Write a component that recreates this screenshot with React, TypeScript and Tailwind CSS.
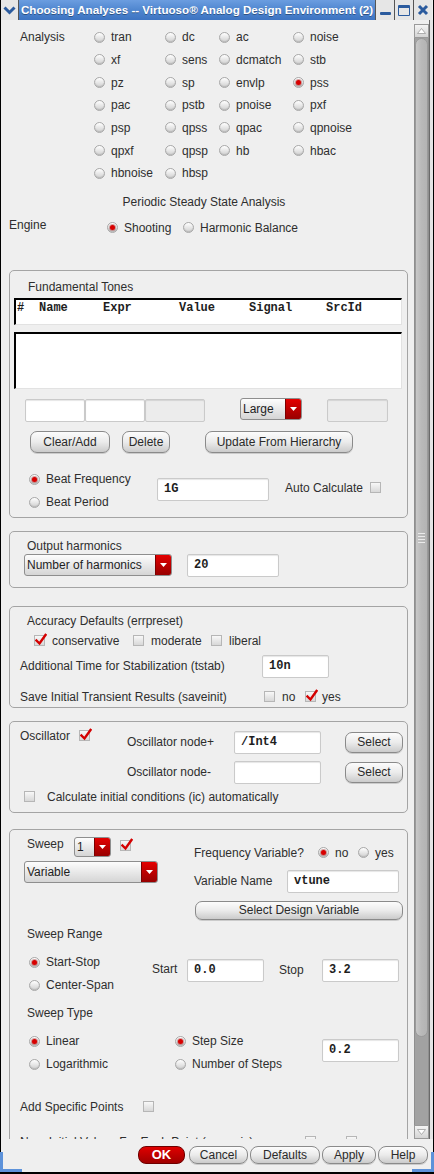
import type { ReactNode } from 'react';

type Opt = { label: string; on?: boolean };

const analyses: Opt[] = [
  { label: 'tran' }, { label: 'dc' }, { label: 'ac' }, { label: 'noise' },
  { label: 'xf' }, { label: 'sens' }, { label: 'dcmatch' }, { label: 'stb' },
  { label: 'pz' }, { label: 'sp' }, { label: 'envlp' }, { label: 'pss', on: true },
  { label: 'pac' }, { label: 'pstb' }, { label: 'pnoise' }, { label: 'pxf' },
  { label: 'psp' }, { label: 'qpss' }, { label: 'qpac' }, { label: 'qpnoise' },
  { label: 'qpxf' }, { label: 'qpsp' }, { label: 'hb' }, { label: 'hbac' },
  { label: 'hbnoise' }, { label: 'hbsp' },
];

function Radio({ on = false }: { on?: boolean }) {
  return (
    <span className="relative inline-block w-[11px] h-[11px] shrink-0 rounded-full border border-[#a8a8a8] bg-linear-to-b from-[#ffffff] to-[#d0d0d0] shadow-[inset_0_-1px_1px_rgba(0,0,0,0.12)]">
      {on && (
        <span className="absolute left-[2px] top-[2px] w-[5px] h-[5px] rounded-full bg-[#d80000] shadow-[0_0_0_1px_rgba(150,0,0,0.35)]" />
      )}
    </span>
  );
}

function RadioOpt({ label, on, className = '' }: Opt & { className?: string }) {
  return (
    <span className={`inline-flex items-center gap-[6px] ${className}`}>
      <Radio on={on} />
      <span>{label}</span>
    </span>
  );
}

function Check({ on = false, className = '' }: { on?: boolean; className?: string }) {
  return (
    <span className={`relative inline-block w-[11px] h-[11px] shrink-0 border border-[#b6b6b6] bg-linear-to-b from-[#f8f8f8] to-[#d8d8d8] ${className}`}>
      {on && (
        <svg className="absolute left-[0px] -top-[3px]" width="12" height="13" viewBox="0 0 12 13">
          <path d="M1.5 7.5 L4.5 10.5 L10.5 2" stroke="#d40000" strokeWidth="2.4" fill="none" strokeLinecap="square" />
        </svg>
      )}
    </span>
  );
}

function Field({ w, v = '', dis = false, className = '' }: { w: string; v?: string; dis?: boolean; className?: string }) {
  return (
    <div
      className={`h-[23px] ${w} shrink-0 rounded-[2px] border border-[#cacaca] ${dis ? 'bg-[#ececec]' : 'bg-white'} shadow-[inset_0_1px_1px_rgba(0,0,0,0.1)] pl-[6px] font-['Liberation_Mono',monospace] font-bold text-[12px] leading-[21px] text-[#1e1e1e] ${className}`}
    >
      {v}
    </div>
  );
}

function Drop({ w, h = 'h-[22px]', label, className = '' }: { w: string; h?: string; label: string; className?: string }) {
  return (
    <div className={`flex ${h} ${w} shrink-0 rounded-[3px] border border-[#8e8e8e] overflow-hidden bg-linear-to-b from-[#fdfdfd] to-[#d5d5d5] ${className}`}>
      <span className="flex-1 pl-[2px] flex items-center text-[#1e1e1e]">{label}</span>
      <span className="w-[16px] flex items-center justify-center bg-linear-to-b from-[#e40000] to-[#980000] border-l border-[#7a0000]">
        <svg width="7" height="4" viewBox="0 0 7 4">
          <path d="M0 0H7L3.5 4Z" fill="white" />
        </svg>
      </span>
    </div>
  );
}

function Btn({ w, h = 'h-[22px]', label, className = '' }: { w: string; h?: string; label: string; className?: string }) {
  return (
    <div
      className={`${h} ${w} shrink-0 rounded-[7px] border border-[#8a8a8a] bg-linear-to-b from-[#fcfcfc] via-[#ebebeb] to-[#cbcbcb] flex items-center justify-center text-[#2a2a2a] shadow-[0_1px_0_rgba(0,0,0,0.15)] ${className}`}
    >
      {label}
    </div>
  );
}

function Box({ h, className = '', children }: { h: string; className?: string; children: ReactNode }) {
  return (
    <div className={`ml-[8px] w-[399px] ${h} shrink-0 rounded-[5px] border border-[#a4a4a4] ${className}`}>{children}</div>
  );
}

function TitleBar() {
  return (
    <div className="flex h-[20px] shrink-0">
      <div className="w-[18px] bg-[#e6e6e6] flex items-center justify-center border-r border-[#555]">
        <svg width="13" height="9" viewBox="0 0 13 9">
          <path d="M1.5 1.5 L6.5 6.5 L11.5 1.5" stroke="#2b5b9e" strokeWidth="3" fill="none" />
        </svg>
      </div>
      <div className="w-[356px] overflow-hidden bg-linear-to-b from-[#6b9de0] via-[#4f86cf] to-[#3d74c2] pl-[2px] flex items-center">
        <span className="whitespace-nowrap font-bold text-[11.6px] text-white [text-shadow:0_1px_0_rgba(0,0,0,0.35)]">
          Choosing Analyses -- Virtuoso® Analog Design Environment (2)
        </span>
      </div>
      <div className="w-[19px] bg-[#e6e6e6] border-l border-[#555] flex items-end justify-center pb-[5px]">
        <div className="w-[11px] h-[3px] bg-[#2b5b9e] rounded-[1px]" />
      </div>
      <div className="w-[19px] bg-[#e6e6e6] border-l border-[#555] flex items-center justify-center">
        <div className="w-[12px] h-[11px] border-[1.5px] border-t-[3px] border-[#2b5b9e] rounded-[1px]" />
      </div>
      <div className="w-[19px] bg-[#e6e6e6] border-l border-[#555] flex items-center justify-center">
        <svg width="12" height="12" viewBox="0 0 12 12">
          <path d="M2 2 L10 10 M10 2 L2 10" stroke="#2b5b9e" strokeWidth="3" />
        </svg>
      </div>
    </div>
  );
}

function ArrowBox({ down = false }: { down?: boolean }) {
  return (
    <div className="h-[14px] shrink-0 border border-[#9a9a9a] bg-linear-to-b from-[#f4f4f4] to-[#d4d4d4] flex items-center justify-center">
      <svg width="9" height="6" viewBox="0 0 9 6">
        <path d={down ? 'M0.5 0.5H8.5L4.5 5.5Z' : 'M0.5 5.5H8.5L4.5 0.5Z'} fill="white" stroke="#9c9c9c" strokeWidth="0.8" />
      </svg>
    </div>
  );
}

function ScrollBar() {
  return (
    <div className="w-[15px] shrink-0 flex flex-col pt-[4px]">
      <ArrowBox />
      <div className="flex-1 bg-[#a2a2a2] border-x border-[#8f8f8f]">
        <div className="h-[999px] rounded-[7px] border border-[#9a9a9a] bg-linear-to-r from-[#c8c8c8] via-[#b9b9b9] to-[#b3b3b3] flex flex-col items-center justify-center gap-[2px]">
          <div className="w-[7px] h-px bg-[#eaeaea]" />
          <div className="w-[7px] h-px bg-[#eaeaea]" />
          <div className="w-[7px] h-px bg-[#eaeaea]" />
          <div className="w-[7px] h-px bg-[#eaeaea]" />
        </div>
      </div>
      <ArrowBox down />
    </div>
  );
}

function Content() {
  return (
    <div className="w-[413px] shrink-0 overflow-hidden flex flex-col">
      {/* analysis grid */}
      <div className="flex pt-[6px]">
        <div className="w-[93px] pl-[19px] leading-[22.67px]">Analysis</div>
        <div className="grid grid-cols-[71px_54px_74px_100px] auto-rows-[22.67px]">
          {analyses.map((a) => (
            <div key={a.label} className="flex items-center">
              <RadioOpt label={a.label} on={a.on} />
            </div>
          ))}
        </div>
      </div>
      <div className="ml-[3px] w-[409px] h-px bg-[#6e6e6e]" />

      <div className="mt-[9px] w-[406px] text-center leading-[16px]">Periodic Steady State Analysis</div>
      <div className="mt-[9px] h-[18px] flex items-center">
        <span className="pl-[8px] w-[106px] mb-[5px]">Engine</span>
        <RadioOpt label="Shooting" on className="w-[76px]" />
        <RadioOpt label="Harmonic Balance" />
      </div>

      {/* fundamental tones */}
      <Box h="h-[248px]" className="mt-[33px]">
        <div className="pt-[8px] pl-[18px] leading-[16px]">Fundamental Tones</div>
        <div className="mt-[3px] ml-[4px] w-[388px] h-[27px] bg-white border-t-2 border-l-2 border-t-black border-l-black border-r border-b border-r-[#e2e2e2] border-b-[#e2e2e2] flex pt-px font-['Liberation_Mono',monospace] font-bold text-[12px] leading-[14px] text-[#1e1e1e]">
          <span className="pl-[1px] w-[23px]">#</span>
          <span className="w-[64px]">Name</span>
          <span className="w-[76px]">Expr</span>
          <span className="w-[70px]">Value</span>
          <span className="w-[77px]">Signal</span>
          <span>SrcId</span>
        </div>
        <div className="mt-[7px] ml-[4px] w-[388px] h-[57px] bg-white border-t-2 border-l-2 border-t-black border-l-black border-r border-b border-r-[#e2e2e2] border-b-[#e2e2e2]" />
        <div className="mt-[10px] ml-[15px] flex items-start">
          <Field w="w-[60px]" />
          <Field w="w-[60px]" />
          <Field w="w-[60px]" dis />
          <Drop w="w-[62px]" label="Large" className="ml-[35px] -mt-[1px]" />
          <Field w="w-[61px]" dis className="ml-[25px]" />
        </div>
        <div className="mt-[9px] ml-[20px] flex">
          <Btn w="w-[80px]" label="Clear/Add" />
          <Btn w="w-[48px]" label="Delete" className="ml-[12px]" />
          <Btn w="w-[148px]" label="Update From Hierarchy" className="ml-[35px]" />
        </div>
        <div className="mt-[15px] flex items-start">
          <div className="ml-[19px] w-[128px] flex flex-col">
            <div className="h-[23px] flex items-center"><RadioOpt label="Beat Frequency" on /></div>
            <div className="h-[23px] flex items-center"><RadioOpt label="Beat Period" /></div>
          </div>
          <Field w="w-[112px]" v="1G" className="mt-[10px]" />
          <div className="ml-[16px] mt-[12px] h-[16px] flex items-center gap-[7px]">
            <span>Auto Calculate</span>
            <Check />
          </div>
        </div>
      </Box>

      {/* output harmonics */}
      <Box h="h-[57px]" className="mt-[13px]">
        <div className="pt-[6px] pl-[17px] leading-[16px]">Output harmonics</div>
        <div className="ml-[14px] flex items-start">
          <Drop w="w-[148px]" label="Number of harmonics" />
          <Field w="w-[92px]" v="20" className="ml-[15px]" />
        </div>
      </Box>

      {/* accuracy */}
      <Box h="h-[102px]" className="mt-[18px]">
        <div className="pt-[6px] pl-[17px] leading-[16px]">Accuracy Defaults (errpreset)</div>
        <div className="mt-[4px] h-[16px] pl-[24px] flex items-center">
          <span className="w-[99px] flex items-center gap-[7px]"><Check on />conservative</span>
          <span className="w-[78px] flex items-center gap-[7px]"><Check />moderate</span>
          <span className="flex items-center gap-[7px]"><Check />liberal</span>
        </div>
        <div className="mt-[6px] h-[23px] pl-[10px] flex items-center">
          <span className="w-[242px]">Additional Time for Stabilization (tstab)</span>
          <Field w="w-[67px]" v="10n" />
        </div>
        <div className="mt-[11px] h-[16px] pl-[10px] flex items-center">
          <span className="w-[244px]">Save Initial Transient Results (saveinit)</span>
          <span className="w-[41px] flex items-center gap-[7px]"><Check />no</span>
          <span className="flex items-center gap-[6px]"><Check on />yes</span>
        </div>
      </Box>

      {/* oscillator */}
      <Box h="h-[92px]" className="mt-[13px]">
        <div className="pt-[9px] flex items-start">
          <div className="w-[117px] pl-[10px] -mt-[3px] h-[16px] flex items-center gap-[9px]">
            <span>Oscillator</span>
            <Check on />
          </div>
          <span className="w-[107px] leading-[23px]">Oscillator node+</span>
          <Field w="w-[87px]" v="/Int4" />
          <Btn w="w-[58px]" h="h-[21px]" label="Select" className="ml-[24px] mt-[1px]" />
        </div>
        <div className="mt-[7px] flex items-start">
          <div className="w-[117px]" />
          <span className="w-[107px] leading-[23px]">Oscillator node-</span>
          <Field w="w-[87px]" />
          <Btn w="w-[58px]" h="h-[21px]" label="Select" className="ml-[24px] mt-[1px]" />
        </div>
        <div className="mt-[5px] h-[16px] pl-[14px] flex items-center gap-[12px]">
          <Check />
          <span>Calculate initial conditions (ic) automatically</span>
        </div>
      </Box>

      {/* sweep */}
      <Box h="h-[420px]" className="mt-[16px]">
        <div className="pt-[7px] flex items-start">
          <div className="w-[184px] flex flex-col">
            <div className="flex items-start pl-[17px]">
              <span className="w-[47px] leading-[14px]">Sweep</span>
              <Drop w="w-[37px]" h="h-[20px]" label="1" />
              <Check on className="ml-[9px] mt-[3px]" />
            </div>
            <Drop w="w-[134px]" label="Variable" className="mt-[4px] ml-[14px]" />
          </div>
          <div className="flex flex-col">
            <div className="mt-[8px] h-[16px] flex items-center">
              <span className="w-[124px]">Frequency Variable?</span>
              <RadioOpt label="no" on className="w-[40px]" />
              <RadioOpt label="yes" />
            </div>
            <div className="mt-[9px] h-[23px] flex items-center">
              <span className="w-[93px]">Variable Name</span>
              <Field w="w-[112px]" v="vtune" />
            </div>
            <Btn w="w-[208px]" h="h-[19px]" label="Select Design Variable" className="mt-[8px] ml-[1px]" />
          </div>
        </div>
        <div className="mt-[6px] pl-[17px] leading-[16px]">Sweep Range</div>
        <div className="mt-[9px] flex items-start">
          <div className="pl-[19px] w-[142px] flex flex-col">
            <div className="h-[23px] flex items-center"><RadioOpt label="Start-Stop" on /></div>
            <div className="h-[23px] flex items-center"><RadioOpt label="Center-Span" /></div>
          </div>
          <span className="mt-[7px] w-[35px] leading-[23px]">Start</span>
          <Field w="w-[77px]" v="0.0" className="mt-[8px]" />
          <span className="mt-[8px] ml-[15px] w-[43px] leading-[23px]">Stop</span>
          <Field w="w-[77px]" v="3.2" className="mt-[8px]" />
        </div>
        <div className="mt-[8px] pl-[17px] leading-[16px]">Sweep Type</div>
        <div className="mt-[9px] flex items-start">
          <div className="pl-[19px] w-[165px] flex flex-col">
            <div className="h-[23px] flex items-center"><RadioOpt label="Linear" on /></div>
            <div className="h-[23px] flex items-center"><RadioOpt label="Logarithmic" /></div>
          </div>
          <div className="w-[147px] flex flex-col">
            <div className="h-[23px] flex items-center"><RadioOpt label="Step Size" on /></div>
            <div className="h-[23px] flex items-center"><RadioOpt label="Number of Steps" /></div>
          </div>
          <Field w="w-[77px]" v="0.2" className="mt-[9px]" />
        </div>
        <div className="mt-[23px] h-[16px] pl-[10px] flex items-center">
          <span className="w-[123px]">Add Specific Points</span>
          <Check />
        </div>
        <div className="mt-[19px] h-[16px] pl-[10px] flex items-center">
          <span className="w-[285px] whitespace-nowrap">Num Initial Values For Each Point (sweepic)</span>
          <span className="w-[41px] flex items-center gap-[7px]"><Check />no</span>
          <span className="flex items-center gap-[6px]"><Check />yes</span>
        </div>
      </Box>
    </div>
  );
}

export default function App() {
  return (
    <div className="relative w-[434px] h-[1174px] flex flex-col bg-[#efefef] border-l border-r border-b-2 border-black font-['Liberation_Sans',Arial,sans-serif] text-[12px] text-[#2e2e2e]">
      <TitleBar />
      <div className="flex h-[1119px] shrink-0">
        <Content />
        <ScrollBar />
        <div className="flex-1 border-l border-[#6a6a6a] bg-[#e4e4e4]" />
      </div>
      <div className="flex-1 flex justify-end items-start pt-[7px] pr-[5px]">
        <div className="h-[18px] w-[47px] rounded-[8px] border border-[#6e0000] bg-linear-to-b from-[#e00000] to-[#a00000] flex items-center justify-center font-bold text-white text-[13px]">
          OK
        </div>
        <Btn w="w-[59px]" h="h-[18px]" label="Cancel" className="ml-[4px] rounded-[8px]" />
        <Btn w="w-[70px]" h="h-[18px]" label="Defaults" className="ml-[2px] rounded-[8px]" />
        <Btn w="w-[54px]" h="h-[18px]" label="Apply" className="ml-[2px] rounded-[8px]" />
        <Btn w="w-[50px]" h="h-[18px]" label="Help" className="ml-[2px] rounded-[8px]" />
      </div>
      {/* resize corners */}
      <div className="absolute -left-px bottom-0 w-[3px] h-[20px] bg-[#5d92da]" />
      <div className="absolute -left-px bottom-0 w-[22px] h-[3px] bg-[#5d92da]" />
      <div className="absolute -right-px bottom-0 w-[3px] h-[20px] bg-[#5d92da]" />
      <div className="absolute -right-px bottom-0 w-[22px] h-[3px] bg-[#5d92da]" />
    </div>
  );
}
